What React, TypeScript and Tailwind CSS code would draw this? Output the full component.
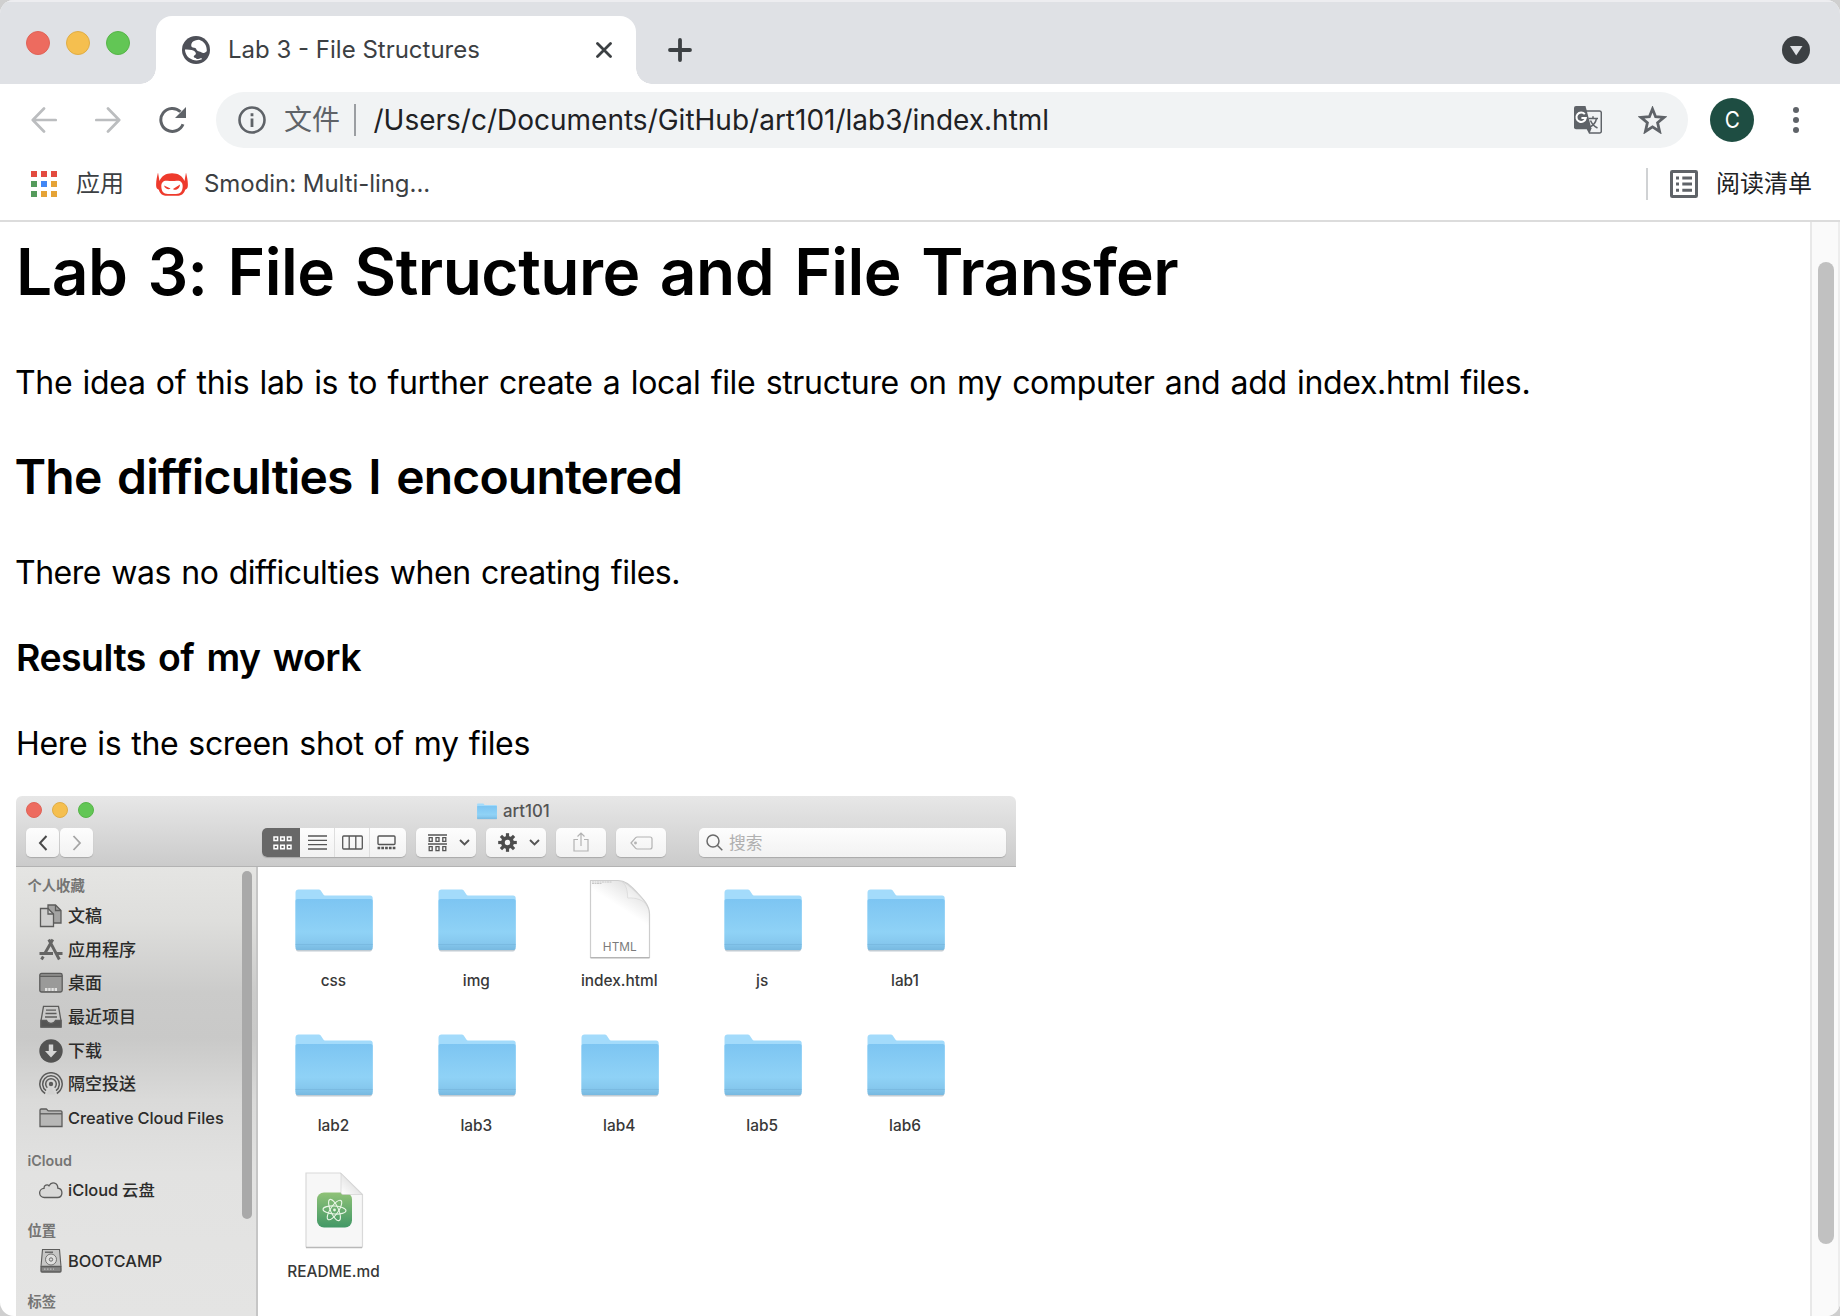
import type { ReactNode } from "react";

const SANS = "font-['Inter','Noto_Sans_CJK_SC',sans-serif]";

function Globe() {
  return (
    <svg className="size-7" viewBox="0 0 28 28">
      <circle cx="14" cy="14" r="14" fill="#4e5058" />
      <path
        d="M17 3.800C14.500 4 11.500 4.600 10.200 6.200c-1 1.300-1.400 3.600-.4 4.800 1.100 1.300 3.700.3 4.300 1.800.5 1.500 1.200 2.500 3 2.600 1.900.1 2.600 1.700 4.600 1.500 1.400-.1 2.400-1 3.100-2C25 9.500 22 5.200 17 3.800z"
        fill="#fff"
      />
      <path
        d="M2.900 13.600c2.500-.2 4.800 0 6.700.5 2.300.7 4.100 1.700 4.300 3.500.1 1.500-2 1.800-2.200 3-.1 1.200 1.900 1.200 2.800 2.200.6.700 3-.1 4.500-.8l1.300 1C14.500 26.300 3.500 24 2.900 13.600z"
        fill="#fff"
      />
    </svg>
  );
}

function Smodin() {
  return (
    <svg className="h-6 w-8" viewBox="0 0 32 24">
      <path d="M2 .5l1.500 8.500C5.500 4 10 1.300 16 1.300S26.500 4 28.500 9L30 .5c1 4.500 2.400 9.500 1.700 14.500-.3 1.700-1.300 2.300-2.500 2.700C28 22 25 23.800 21 23.800H11C7 23.800 4 22 2.800 17.700 1.600 17.300.6 16.700.3 15-.4 10 1 5 2 .5z" fill="#ee3a2c" />
      <path d="M5.300 14c0-3.600 2.200-5.700 6-5.300 3.200.3 6.200.3 9.400 0 3.800-.4 6 1.700 6 5.300 0 5-2 8-6.700 8h-8c-4.700 0-6.700-3-6.700-8z" fill="#fff" />
      <path d="M8 13.500l6.500 3c-1 1.200-5.500 1-6.500-3zM24 12.500l-7 4.500c1.800 2 6.800.5 7-4.500z" fill="#ee3a2c" />
    </svg>
  );
}

function Translate() {
  return (
    <svg className="size-7" viewBox="0 0 28 28">
      <path d="M12 5h13.500A1.800 1.800 0 0 1 27.300 6.800v18.400a1.800 1.800 0 0 1-1.800 1.800H15.500L13 22" fill="none" stroke="#5f6368" strokeWidth="1.500" />
      <path d="M2 0h9.500l6 23-4.500.2H2a2 2 0 0 1-2-2V2a2 2 0 0 1 2-2z" fill="#5f6368" />
      <path d="M13 23.200l4.500-1L15.800 27z" fill="#5f6368" />
      <path d="M10.800 8.200A4.700 4.700 0 1 0 11.800 12H7.400" fill="none" stroke="#fff" strokeWidth="2" />
      <path d="M14.500 12.500H24M19 10.300v2.200M22.500 12.500c-.8 4-3.500 7-6.500 8.500M16.500 14.500c1.200 3 4 6 7 7.500" fill="none" stroke="#5f6368" strokeWidth="1.500" />
    </svg>
  );
}

function Folder({ className }: { className: string }) {
  return (
    <svg className={className} viewBox="0 0 78 63">
      <defs>
        <linearGradient id="folderFront" x1="0" y1="0" x2="0" y2="1">
          <stop offset="0" stopColor="#7dc5f2" />
          <stop offset=".65" stopColor="#8fd2f6" />
          <stop offset=".86" stopColor="#86c8ee" />
          <stop offset="1" stopColor="#78b9e0" />
        </linearGradient>
      </defs>
      <rect x="1" y="58" width="76" height="4.500" rx="2" fill="#c2ccd3" />
      <path d="M.5 3.500C.5 1.500 1.800.5 3.500.5H23c1.800 0 2.600.6 3.400 2l2 3c.5.800 1 1 2 1H75c1.800 0 2.700 1 2.700 2.800V58H.5z" fill="#a3dbfb" />
      <path d="M.5 12c0-1.300.7-2 2-2h73.200c1.300 0 2 .7 2 2v47c0 1.300-.7 2-2 2H2.500c-1.300 0-2-.7-2-2z" fill="url(#folderFront)" />
      <path d="M.5 55.500h77.200" stroke="#74b3da" strokeWidth=".8" opacity=".7" />
    </svg>
  );
}

function HtmlFile() {
  return (
    <div className="relative -mt-[2px] flex h-20 w-[62px] items-end justify-center pb-[5px]">
      <svg className="absolute inset-0 h-20 w-[62px]" viewBox="0 0 62 80">
        <defs>
          <linearGradient id="curl" x1=".1" y1=".9" x2=".6" y2=".3">
            <stop offset="0" stopColor="#fff" />
            <stop offset="1" stopColor="#e6e6e6" />
          </linearGradient>
          <linearGradient id="curlShade" x1="0" y1="1" x2=".5" y2="0">
            <stop offset=".72" stopColor="#fff" />
            <stop offset="1" stopColor="#e4e4e4" />
          </linearGradient>
        </defs>
        <path d="M1.500 1.500H29C36 1.500 41 6 47 12.500S60.500 26 60.500 35V78.500h-59z" fill="url(#curlShade)" stroke="#cdcdcd" strokeWidth="1.200" />
        <path d="M1.500 78.700h59" stroke="#b4b4b4" strokeWidth="1.400" />
        <path d="M33 2.500c4 3 5.500 8 5.700 16.500C47 18.500 54 20.500 58.500 27 55 20 38 4 33 2.500z" fill="url(#curl)" stroke="#d2d2d2" strokeWidth=".6" />
        <path d="M3 3h20M3 4.500h10" stroke="#bbb" strokeWidth=".8" strokeDasharray="2 .5" />
      </svg>
      <span className="relative text-[11.800px] leading-[14px] text-[#7b7b7b]">HTML</span>
    </div>
  );
}

function ReadmeFile() {
  return (
    <svg className="-mt-[2px] h-[78px] w-[62px]" viewBox="0 0 62 78">
      <defs>
        <linearGradient id="atom" x1="0" y1="0" x2="0" y2="1">
          <stop offset="0" stopColor="#8fc277" />
          <stop offset="1" stopColor="#429866" />
        </linearGradient>
        <linearGradient id="fold" x1="0" y1="1" x2="1" y2="0">
          <stop offset="0" stopColor="#fff" />
          <stop offset="1" stopColor="#cfcfcf" />
        </linearGradient>
      </defs>
      <path d="M3 2h34.500L59.500 23.500V75.500a1 1 0 0 1-1 1H4a1 1 0 0 1-1-1z" fill="#f7f7f7" stroke="#d9d9d9" strokeWidth="1.200" />
      <path d="M3 76.500h56" stroke="#b9b9b9" strokeWidth="1.300" />
      <rect x="14" y="21.500" width="35" height="35" rx="7" fill="url(#atom)" />
      <path d="M38 2.500L59 23.500H40a2 2 0 0 1-2-2z" fill="url(#fold)" stroke="#ccc" strokeWidth=".6" />
      <g fill="none" stroke="#e9f6e6" strokeWidth="1.100">
        <ellipse cx="31.500" cy="39" rx="11.500" ry="4" transform="rotate(4 31.500 39)" />
        <ellipse cx="31.500" cy="39" rx="11.500" ry="4" transform="rotate(66 31.500 39)" />
        <ellipse cx="31.500" cy="39" rx="11.500" ry="4" transform="rotate(124 31.500 39)" />
      </g>
      <circle cx="31.500" cy="39" r="1.400" fill="#e9f6e6" />
    </svg>
  );
}

function SideSvg({ children }: { children: ReactNode }) {
  return (
    <svg className="size-6 shrink-0" viewBox="0 0 24 24" fill="none" stroke="#5c5c5b" strokeWidth="1.300">
      {children}
    </svg>
  );
}

const favourites: { label: string; icon: ReactNode }[] = [
  {
    label: "文稿",
    icon: (
      <SideSvg>
        <path d="M9 1h7.500l5.500 5.500V19H9z" fill="#a3a3a2" />
        <path d="M16.500 1v5.500H22" />
        <path d="M1.500 4.500h7.500l5.500 5.500V22.500h-13z" fill="#cfcfce" />
        <path d="M9 4.500v5.500h5.500" />
      </SideSvg>
    ),
  },
  {
    label: "应用程序",
    icon: (
      <SideSvg>
        <path d="M13.800 1.500L5.500 16M9.800 1.500l10.500 20M.5 15.500h13.500M17.500 15.500h6M4.300 18.500L2.500 21.500" stroke="#656564" strokeWidth="2.900" />
      </SideSvg>
    ),
  },
  {
    label: "桌面",
    icon: (
      <SideSvg>
        <rect x=".8" y="2.500" width="22.400" height="18.500" rx="1.800" fill="#9a9a99" />
        <path d="M1 5.300h22" />
        <path d="M6 18.600h12" stroke="#e2e2e1" strokeWidth="3" strokeDasharray="2.400 .8" />
      </SideSvg>
    ),
  },
  {
    label: "最近项目",
    icon: (
      <SideSvg>
        <path d="M4.500 1.300h15l2.500 14.500v6H2v-6z" fill="#c9c9c8" />
        <path d="M2 15.500h5.500c.8 2.200 2 2.800 4.500 2.800s3.700-.6 4.500-2.800H22v6.500H2z" fill="#555554" />
        <path d="M7 5.200h10M6.500 8.500h11M6 12h12" />
      </SideSvg>
    ),
  },
  {
    label: "下载",
    icon: (
      <SideSvg>
        <circle cx="12" cy="12" r="11.700" fill="#535352" stroke="none" />
        <path d="M9.800 5.500h4.400V12H18l-6 6.500L6 12h3.800z" fill="#d6d6d5" stroke="none" />
      </SideSvg>
    ),
  },
  {
    label: "隔空投送",
    icon: (
      <SideSvg>
        <path d="M6.200 21.500a11.200 11.200 0 1 1 11.600 0M7 18.700a8.300 8.300 0 1 1 10 0M8.300 15.800a5.300 5.300 0 1 1 7.400 0" strokeWidth="1.500" />
        <circle cx="12" cy="12" r="2.200" fill="#5c5c5b" stroke="none" />
        <path d="M12 14l-4.500 8.500h9z" fill="#d2d2d1" stroke="none" />
      </SideSvg>
    ),
  },
  {
    label: "Creative Cloud Files",
    icon: (
      <SideSvg>
        <path d="M1 20.500V4.200c0-.8.500-1.200 1.200-1.200h5c.8 0 1.300 1.800 2.300 1.800h12.300c.8 0 1.200.4 1.200 1.200v14.500z" fill="#b7b7b6" />
        <path d="M1 7.800h22" />
      </SideSvg>
    ),
  },
];

function SideItem({ label, icon }: { label: string; icon: ReactNode }) {
  const latin = /^[A-Za-z]/.test(label);
  return (
    <div className="flex h-[33.700px] items-center gap-[5px] pl-[23px] whitespace-nowrap text-[#2c2c2b]">
      {icon}
      <span className={latin ? "text-[16.400px] leading-6 font-medium [word-spacing:-0.500px]" : "text-[17px] leading-6 font-medium"}>{label}</span>
    </div>
  );
}

function SideHead({ children }: { children: ReactNode }) {
  return <div className="pl-[11.500px] text-[14.300px] leading-5 font-semibold text-[#757574]">{children}</div>;
}

function Lights({ className, dot }: { className: string; dot: string }) {
  return (
    <div className={`flex ${className}`}>
      <span className={`rounded-full border border-[#e06357] bg-[#ed6b5f] ${dot}`} />
      <span className={`rounded-full border border-[#e0ad45] bg-[#f5bf4f] ${dot}`} />
      <span className={`rounded-full border border-[#56b548] bg-[#62c655] ${dot}`} />
    </div>
  );
}

const BTN = "flex h-[29px] items-center justify-center rounded-[5px] bg-gradient-to-b from-[#fdfdfd] to-[#f2f2f2] shadow-[0_1px_1px_#a9a9a9]";

function Chevron() {
  return (
    <svg className="h-[7px] w-[11px]" viewBox="0 0 11 7" fill="none" stroke="#555" strokeWidth="1.900">
      <path d="M1 1l4.500 4.500L10 1" />
    </svg>
  );
}

const gearTeeth = [0, 45, 90, 135, 180, 225, 270, 315];

function FinderToolbar() {
  return (
    <div className="h-[71px] rounded-t-[6px] border-b border-[#b3b3b3] bg-gradient-to-b from-[#e7e7e7] to-[#cbcbcb]">
      <div className="flex h-8 items-start">
        <Lights className="mt-[6px] ml-[10px] gap-[10px]" dot="size-4" />
        <div className="mt-1 ml-[383px] flex items-center gap-[6px]">
          <Folder className="h-[17px] w-5" />
          <span className="text-[16.800px] leading-[22px] font-medium text-[#555]">art101</span>
        </div>
      </div>
      <div className="flex pl-[10px]">
        <div className={`${BTN} w-[33px]`}>
          <svg className="h-4 w-[10px]" viewBox="0 0 10 16" fill="none" stroke="#4a4a4a" strokeWidth="2"><path d="M8.500 1L2 8l6.500 7" /></svg>
        </div>
        <div className={`${BTN} ml-px w-[33px]`}>
          <svg className="h-4 w-[10px]" viewBox="0 0 10 16" fill="none" stroke="#a5a5a5" strokeWidth="1.800"><path d="M1.500 1L8 8l-6.500 7" /></svg>
        </div>
        <div className={`${BTN} ml-[169px] w-36 overflow-hidden`}>
          <div className="flex h-full w-[38px] items-center justify-center bg-[#686868] pl-[2px]">
            <svg className="h-[14px] w-[19px]" viewBox="0 0 19 14" fill="none" stroke="#fff" strokeWidth="1.500">
              <path d="M1 1h3.600v3.600H1zM7.700 1h3.600v3.600H7.700zM14.400 1H18v3.600h-3.600zM1 9.200h3.600v3.600H1zM7.700 9.200h3.600v3.600H7.700zM14.400 9.200H18v3.600h-3.600z" />
            </svg>
          </div>
          <div className="flex h-full w-[34px] items-center justify-center">
            <svg className="h-[15px] w-[19px]" viewBox="0 0 19 15" stroke="#555" strokeWidth="1.300"><path d="M0 1h19M0 5.300h19M0 9.600h19M0 14h19" /></svg>
          </div>
          <div className="flex h-full w-[36px] items-center justify-center border-x border-[#dedede]">
            <svg className="h-[15px] w-[21px]" viewBox="0 0 21 15" fill="none" stroke="#555" strokeWidth="1.300"><rect x=".7" y="1" width="19.600" height="13" rx="1" /><path d="M7.200 1v13M13.800 1v13" /></svg>
          </div>
          <div className="flex h-full w-[36px] items-center justify-center pr-[4px]">
            <svg className="h-[15px] w-[19px]" viewBox="0 0 19 15" fill="none" stroke="#555" strokeWidth="1.400"><rect x="1" y="1" width="17" height="8.500" rx="1" /><path d="M.5 13h18" strokeWidth="2.400" strokeDasharray="2.700 1.100" /></svg>
          </div>
        </div>
        <div className={`${BTN} ml-[10px] w-[60px] gap-[12px] pl-[6px]`}>
          <svg className="h-[18px] w-[19px]" viewBox="0 0 19 18" fill="none" stroke="#555" strokeWidth="1.300">
            <path d="M0 1h19M0 10h19M1.200 3.700h3v3.600h-3zM8 3.700h3v3.600H8zM14.800 3.700h3v3.600h-3zM1.200 12.700h3v4h-3zM8 12.700h3v4H8zM14.800 12.700h3v4h-3z" />
          </svg>
          <Chevron />
        </div>
        <div className={`${BTN} ml-[10px] w-[60px] gap-[12px] pl-[6px]`}>
          <svg className="size-[19px]" viewBox="-9.500 -9.500 19 19">
            <circle r="4.600" fill="none" stroke="#4d4d4d" strokeWidth="3.800" />
            {gearTeeth.map((a) => (
              <rect key={a} x="-1.600" y="-9.300" width="3.200" height="4" fill="#4d4d4d" transform={`rotate(${a})`} />
            ))}
          </svg>
          <Chevron />
        </div>
        <div className={`${BTN} ml-[10px] w-[50px]`}>
          <svg className="h-5 w-4 -translate-y-px" viewBox="0 0 16 20" fill="none" stroke="#b3b3b3" strokeWidth="1.200"><path d="M5 7.500H1V19h14V7.500h-4M8 14V1M4.500 4.500L8 1l3.500 3.500" /></svg>
        </div>
        <div className={`${BTN} ml-[10px] w-[50px]`}>
          <svg className="h-[14px] w-[23px]" viewBox="0 0 23 14" fill="none" stroke="#b3b3b3" strokeWidth="1.200"><path d="M1 7l4.500-5.200C6 1.200 6.500 1 7.300 1H20c1.300 0 2 .7 2 2v8c0 1.300-.7 2-2 2H7.300c-.8 0-1.300-.2-1.800-.8z" /><circle cx="5.500" cy="7" r=".8" fill="#b3b3b3" /></svg>
        </div>
        <div className={`${BTN} ml-[33px] w-[307px] !justify-start gap-[6px] pl-[7px]`}>
          <svg className="size-[17px]" viewBox="0 0 17 17" fill="none" stroke="#6a6a6a" strokeWidth="1.500"><circle cx="7" cy="7" r="6" /><path d="M11.300 11.300l5 5" /></svg>
          <span className="text-[16.800px] leading-6 text-[#b0b0b0]">搜索</span>
        </div>
      </div>
    </div>
  );
}

const files = ["css", "img", "index.html", "js", "lab1", "lab2", "lab3", "lab4", "lab5", "lab6", "README.md"];

function Finder() {
  return (
    <div className="mt-8 h-[520px] w-[1000px] overflow-hidden">
      <FinderToolbar />
      <div className="flex h-[449px]">
        <div className="flex w-[242px] justify-between border-r-2 border-[#c6c6c6] bg-[linear-gradient(180deg,#e5e5e3_0%,#dededc_12%,#cbcbca_28%,#c9c9c8_38%,#dadad9_52%,#e2e2e1_68%,#e4e4e3_100%)]">
          <div className="pt-[9px]">
            <SideHead>个人收藏</SideHead>
            <div className="mt-[3px]">
              {favourites.map((f) => (
                <SideItem key={f.label} {...f} />
              ))}
            </div>
            <div className="mt-[16px]"><SideHead>iCloud</SideHead></div>
            <div className="mt-[2px]">
              <SideItem
                label="iCloud 云盘"
                icon={
                  <SideSvg>
                    <path d="M5.500 19.500a4.600 4.600 0 0 1-.5-9.200c-.2-3.200 3.500-4.300 5-2.500 3-5.300 9-2.500 8.800 2.400 5.800.8 5.200 9.300-.3 9.300z" fill="#d9d9d8" />
                  </SideSvg>
                }
              />
            </div>
            <div className="mt-[14px]"><SideHead>位置</SideHead></div>
            <div className="mt-1">
              <SideItem
                label="BOOTCAMP"
                icon={
                  <SideSvg>
                    <path d="M3.500.5h17l1.500 17H2z" fill="#c6c6c5" strokeWidth="1.100" />
                    <rect x="2" y="17.500" width="20" height="5.500" rx="1" fill="#858584" />
                    <circle cx="12" cy="10.500" r="5.500" fill="#dededd" strokeWidth=".8" />
                    <circle cx="12" cy="10.500" r="1.700" strokeWidth=".9" />
                    <path d="M6 3.200h8" />
                    <path d="M5 20.200h10" stroke="#bbb" strokeDasharray="1.500 1.500" />
                  </SideSvg>
                }
              />
            </div>
            <div className="mt-[14px]"><SideHead>标签</SideHead></div>
          </div>
          <div className="mt-1 mr-1 h-[348px] w-[10px] rounded-full bg-[#a9a9a9]" />
        </div>
        <div className="grid grid-cols-[repeat(5,142.900px)] auto-rows-[145.300px] content-start bg-white pl-[4.500px]">
          {files.map((f) => (
            <div key={f} className="flex flex-col items-center pt-3">
              <div className="flex h-[82px] items-center justify-center">
                {f === "index.html" ? <HtmlFile /> : f === "README.md" ? <ReadmeFile /> : <Folder className="h-[63px] w-[78px]" />}
              </div>
              <span className="mt-[10px] mr-px text-[15.400px] leading-5 font-medium text-[#383838]">{f}</span>
            </div>
          ))}
        </div>
      </div>
    </div>
  );
}

function TabStrip() {
  return (
    <div className="flex h-[84px] shrink-0 border-t-2 border-[#ededf0] bg-[#dfe1e5]">
      <Lights className="mt-[29px] ml-[26px] gap-4" dot="size-6" />
      <div className="relative mt-[14px] ml-[26px] flex h-[68px] w-[480px] items-center rounded-t-[16px] bg-white pl-[26px]">
        <span className="absolute bottom-0 -left-4 size-4 bg-[radial-gradient(circle_at_0_0,transparent_15.500px,#fff_16px)]" />
        <span className="absolute -right-4 bottom-0 size-4 bg-[radial-gradient(circle_at_100%_0,transparent_15.500px,#fff_16px)]" />
        <Globe />
        <span className="ml-[18px] text-2xl whitespace-nowrap text-[#3c4043]">Lab 3 - File Structures</span>
        <svg className="absolute top-[26px] left-[440px] size-4" viewBox="0 0 16 16" stroke="#3c4043" strokeWidth="2.800" strokeLinecap="round"><path d="M1.500 1.500l13 13M14.500 1.500l-13 13" /></svg>
      </div>
      <svg className="mt-9 ml-8 size-6" viewBox="0 0 24 24" stroke="#3c4043" strokeWidth="3.800" strokeLinecap="round"><path d="M12 2v20M2 12h20" /></svg>
      <svg className="mt-[34px] mr-[30px] ml-auto size-7" viewBox="0 0 28 28"><circle cx="14" cy="14" r="14" fill="#3c4043" /><path d="M8 10h12.500L14.200 19.500z" fill="#dfe1e5" /></svg>
    </div>
  );
}

const APP_COLOURS = ["bg-[#e34b3f]", "bg-[#e34b3f]", "bg-[#e34b3f]", "bg-[#559b5c]", "bg-[#4286f4]", "bg-[#e5a336]", "bg-[#559b5c]", "bg-[#e5a336]", "bg-[#e5a336]"];

function Toolbar() {
  return (
    <div className="h-[138px] shrink-0 border-b-2 border-[#dcdcdc] bg-white">
      <div className="flex h-[72px] items-center pl-[31px]">
        <svg className="size-[26px]" viewBox="0 0 26 26" fill="none" stroke="#bbbdbf" strokeWidth="2.700" strokeLinecap="round" strokeLinejoin="round"><path d="M13 1.500L1.800 13 13 24.500M2 13h22.700" /></svg>
        <svg className="ml-[38px] size-[26px]" viewBox="0 0 26 26" fill="none" stroke="#bbbdbf" strokeWidth="2.700" strokeLinecap="round" strokeLinejoin="round"><path d="M13 1.500L24.200 13 13 24.500M24 13H1.300" /></svg>
        <svg className="ml-[38px] size-7" viewBox="0 0 28 28"><path d="M24 18.200A11.500 11.500 0 1 1 21.500 5.800" fill="none" stroke="#5f6368" strokeWidth="3" /><path d="M27 1v11H16z" fill="#5f6368" /></svg>
        <div className="ml-[29px] flex h-14 w-[1472px] items-center rounded-full bg-[#f1f3f4] pr-[21px] pl-[22px] text-[28px] leading-10">
          <svg className="size-7" viewBox="0 0 28 28" fill="none" stroke="#5f6368"><circle cx="14" cy="14" r="12.500" strokeWidth="2.600" /><path d="M14 12.500V21M14 7.200v3" strokeWidth="2.800" /></svg>
          <span className="ml-[18px] w-14 text-[#5f6368]">文件</span>
          <span className="ml-[14px] h-8 w-0.5 bg-[#9b9ea2]" />
          <span className="ml-[17.500px] text-[#202124]">/Users/c/Documents/GitHub/art101/lab3/index.html</span>
          <span className="ml-auto"><Translate /></span>
          <svg className="ml-9 h-7 w-[29px]" viewBox="0 0 29 28" fill="none" stroke="#5f6368" strokeWidth="2.800"><path d="M14.500 3l3.100 7.700 8.400.7-6.400 5.400 2 8.700-7.100-4.600-7.100 4.600 2-8.700L3 11.400l8.400-.7z" /></svg>
        </div>
        <span className="ml-[22px] flex size-11 items-center justify-center rounded-full bg-[#1e4d42] text-[23px] text-white"><span className="scale-x-90">C</span></span>
        <div className="ml-[39px] flex flex-col gap-1">
          <span className="h-[6px] w-[6px] rounded-full bg-[#5f6368]" />
          <span className="h-[6px] w-[6px] rounded-full bg-[#5f6368]" />
          <span className="h-[6px] w-[6px] rounded-full bg-[#5f6368]" />
        </div>
      </div>
      <div className="flex h-14 items-center pr-7 pl-[31px] text-2xl text-[#3c4043]">
        <div className="grid grid-cols-3 gap-1">
          {APP_COLOURS.map((c, i) => (
            <span key={i} className={`size-[6px] ${c}`} />
          ))}
        </div>
        <span className="ml-[19px] w-12">应用</span>
        <span className="ml-8"><Smodin /></span>
        <span className="ml-[16px] tracking-[-0.05px]">Smodin: Multi-ling...</span>
        <span className="ml-auto h-8 w-0.5 bg-[#d0d2d4]" />
        <svg className="ml-[22px] size-7" viewBox="0 0 28 28" fill="none" stroke="#5f6368"><rect x="1.500" y="1.500" width="25" height="25" rx=".8" strokeWidth="3" /><path d="M6 8h3M6 14h3M6 20.300h3M12.300 8h9.700M12.300 14h9.700M12.300 20.300h9.700" strokeWidth="3" /></svg>
        <span className="ml-[18px] text-[#202124]">阅读清单</span>
      </div>
    </div>
  );
}

export default function App() {
  return (
    <div className={`h-[1316px] w-[1840px] overflow-hidden bg-[#cfcfcf] ${SANS}`}>
      <div className="flex h-full flex-col overflow-hidden rounded-[14px] bg-white">
        <TabStrip />
        <Toolbar />
        <div className="flex h-[1094px]">
          <main className="w-[1810px] overflow-hidden pl-4 whitespace-nowrap text-black">
            <h1 className="mt-[18px] text-[64px] leading-[64px] font-semibold tracking-[-0.5px] [word-spacing:4.400px]">Lab 3: File Structure and File Transfer</h1>
            <p className="mt-[59px] -ml-px text-[32px] leading-10 tracking-[-0.32px] [word-spacing:1.600px]">
              The idea of this lab is to further create a local file structure on my computer and add index.html files.
            </p>
            <h2 className="mt-[50px] -ml-[1.500px] text-[48px] leading-[48px] font-semibold tracking-[-0.83px] [word-spacing:4.300px]">The difficulties I encountered</h2>
            <p className="mt-[52px] -ml-px text-[32px] leading-10 tracking-[-0.5px] [word-spacing:1.900px]">There was no difficulties when creating files.</p>
            <h3 className="mt-[45px] text-[37.440px] leading-10 font-semibold tracking-[-0.5px] [word-spacing:3.200px]">Results of my work</h3>
            <p className="mt-[46px] text-[32px] leading-10 tracking-[-0.3px] [word-spacing:1.200px]">Here is the screen shot of my files</p>
            <Finder />
          </main>
          <div className="flex w-[30px] border-r-2 border-l-2 border-r-[#ededed] border-l-[#e8e8e8] bg-[#fafafa] pt-10 pl-[6px]">
            <div className="h-[982px] w-4 rounded-full bg-[#c1c1c1]" />
          </div>
        </div>
      </div>
    </div>
  );
}
